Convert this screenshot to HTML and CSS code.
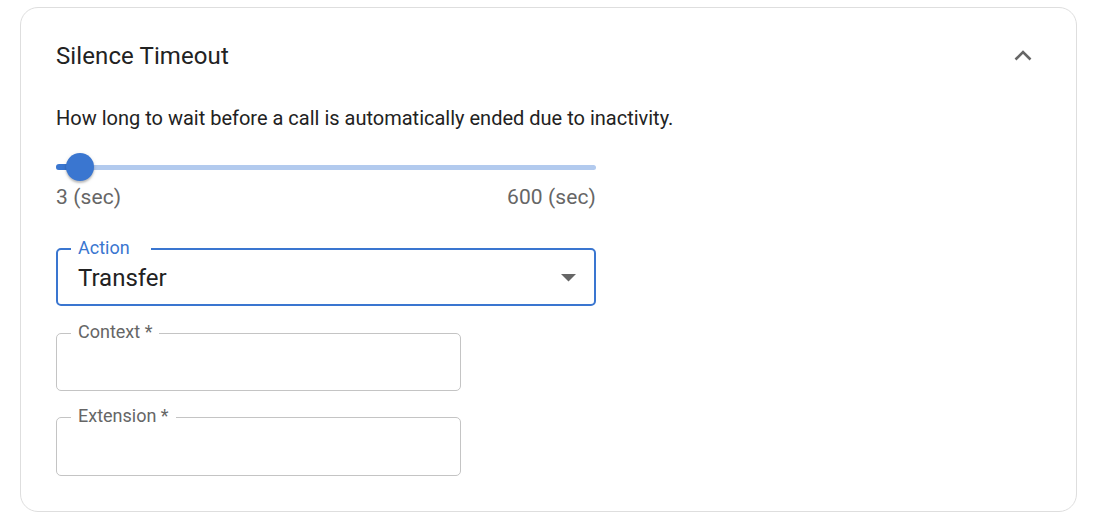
FILE: index.html
```html
<!DOCTYPE html>
<html>
<head>
<meta charset="utf-8">
<link rel="stylesheet" href="styles.css">
</head>
<body>
<div class="card">
  <div class="header">
    <div class="title">Silence Timeout</div>
    <svg class="chevron" width="24" height="24" viewBox="0 0 24 24"><path d="M4.5 15.5 L12 8 L19.5 15.5" fill="none" stroke="#666" stroke-width="2.6"/></svg>
  </div>
  <div class="desc">How long to wait before a call is automatically ended due to inactivity.</div>
  <div class="slider">
    <div class="rail"></div>
    <div class="track" style="width: 24px"></div>
    <div class="thumb" style="left: 24px"></div>
  </div>
  <div class="slider-labels"><span>3 (sec)</span><span>600 (sec)</span></div>
  <div class="field select focused">
    <span class="label">Action</span>
    <span class="value">Transfer</span>
    <svg class="caret" width="15" height="8" viewBox="0 0 15 8"><path d="M0 0 L15 0 L7.5 7.5 Z" fill="#666"/></svg>
  </div>
  <div class="field text">
    <span class="label">Context *</span>
  </div>
  <div class="field text ext">
    <span class="label">Extension *</span>
  </div>
</div>
</body>
</html>
```
FILE: styles.css
```css
* { box-sizing: border-box; }
body {
  margin: 0;
  background: #fff;
  font-family: Roboto, "Noto Sans", sans-serif;
  color: #222;
}
.card {
  margin: 7px 0 0 20px;
  width: 1057px;
  height: 505px;
  border: 1px solid #dedede;
  border-radius: 18px;
  padding: 33px 36px 0 35px;
  display: flex;
  flex-direction: column;
}
.header {
  display: flex;
  justify-content: space-between;
  align-items: center;
  height: 30px;
}
.title {
  font-size: 24px;
  line-height: 30px;
  color: #222;
  letter-spacing: 0.1px;
}
.chevron {
  margin-right: 5px;
}
.desc {
  margin-top: 34px;
  font-size: 20px;
  line-height: 26px;
  color: #222;
}
.slider {
  position: relative;
  margin-top: 21px;
  width: 540px;
  height: 30px;
}
.rail {
  position: absolute;
  left: 0;
  right: 0;
  top: 12.5px;
  height: 5px;
  border-radius: 3px;
  background: #b2caee;
}
.track {
  position: absolute;
  left: 0;
  top: 12px;
  height: 6px;
  border-radius: 3px;
  background: #3a76d0;
}
.thumb {
  position: absolute;
  top: 1px;
  width: 28px;
  height: 28px;
  margin-left: -14px;
  border-radius: 50%;
  background: #3a76d0;
  box-shadow: 0 2px 2px rgba(0,0,0,0.2), 0 1px 4px rgba(0,0,0,0.12);
}
.slider-labels {
  margin-top: 2px;
  width: 540px;
  display: flex;
  justify-content: space-between;
  font-size: 21px;
  line-height: 26px;
  color: #666;
  letter-spacing: 0.1px;
}
.field {
  position: relative;
  height: 58px;
  border-radius: 5px;
}
.select {
  margin-top: 38px;
  width: 540px;
  border: 2px solid #3a76d0;
  display: flex;
  align-items: center;
  justify-content: space-between;
  padding: 2px 18px 0 20px;
}
.value {
  font-size: 24px;
  color: #222;
}
.text {
  margin-top: 27px;
  width: 405px;
  border: 1px solid #c4c4c4;
}
.ext {
  margin-top: 26px;
  height: 59px;
}
.label {
  position: absolute;
  top: -13px;
  left: 14px;
  padding: 0 7px;
  background: #fff;
  font-size: 18px;
  line-height: 22px;
  color: #666;
}
.select .label {
  left: 13px;
  color: #3a76d0;
  padding-right: 21px;
}
```
